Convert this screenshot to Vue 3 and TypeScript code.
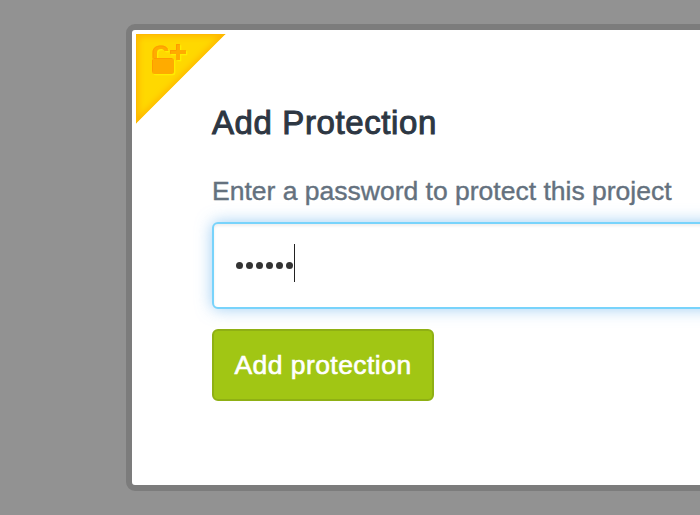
<script setup lang="ts">
import { ref } from 'vue'

const title = 'Add Protection'
const label = 'Enter a password to protect this project'
const action = 'Add protection'
const typedCharacters = ref(6)
</script>

<template>
  <main class="backdrop">
    <section class="modal" role="dialog" :aria-label="title">
      <svg class="ribbon" width="90" height="90" viewBox="0 0 90 90" aria-hidden="true">
        <defs>
          <clipPath id="corner"><path d="M0 0H89.500L0 89.500Z" /></clipPath>
          <filter id="soften" x="-20%" y="-20%" width="140%" height="140%">
            <feGaussianBlur stdDeviation="3" />
          </filter>
        </defs>
        <g clip-path="url(#corner)">
          <path d="M0 0H90L0 90Z" fill="#ffd800" />
          <path d="M0 0H90L0 90Z" fill="none" stroke="#ffac00" stroke-width="4.500" filter="url(#soften)" />
          <path d="M.5 90V.5H90" fill="none" stroke="#ffb900" stroke-width="1" />
        </g>
        <g transform="translate(1.300 1.300)" fill="#ffed00">
          <rect x="16" y="24" width="22" height="16" rx="2.500" />
          <path d="M16.500 25V18.500C16.500 14 20 11.500 25 11.500C29 11.500 32 13.500 32.500 17H28.500C27.500 15.500 26.500 15 25 15C22 15 21 16.500 21 19V25Z" />
          <path d="M40 10H44V16H50V20H44V26H40V20H34V16H40Z" />
        </g>
        <g fill="#ffab00">
          <rect x="16" y="24" width="22" height="16" rx="2.500" />
          <path d="M16.500 25V18.500C16.500 14 20 11.500 25 11.500C29 11.500 32 13.500 32.500 17H28.500C27.500 15.500 26.500 15 25 15C22 15 21 16.500 21 19V25Z" />
          <path d="M40 10H44V16H50V20H44V26H40V20H34V16H40Z" />
        </g>
        <path d="M17 24V18.500C17 14 20 12 25 12C28 12 30.500 13 31.500 15M16.500 26V37.500M18 24.500H36M40.500 16V10.500H43.500M34.500 19.500V16.500H40.500" fill="none" stroke="#ff9600" stroke-width="1" opacity=".8" />
      </svg>
      <form class="content" @submit.prevent>
        <h1 class="title"><span>{{ title }}</span></h1>
        <div class="label"><span>{{ label }}</span></div>
        <div class="field" role="textbox" :aria-label="label">
          <i v-for="n in typedCharacters" :key="n" class="dot"></i>
          <i class="caret"></i>
        </div>
        <button class="submit" type="submit"><span>{{ action }}</span></button>
      </form>
    </section>
  </main>
</template>

<style>
body {
  margin: 0;
  overflow: hidden;
}
</style>

<style scoped>
.backdrop {
  box-sizing: border-box;
  width: 700px;
  height: 515px;
  padding: 24px 0 0 126px;
  overflow: hidden;
  background: #929292;
  font-family: "Liberation Sans", Arial, sans-serif;
}

.modal {
  box-sizing: border-box;
  position: relative;
  width: 720px;
  height: 467px;
  border: 6px solid #7c7c7c;
  border-radius: 9px;
  background: #fff;
}

.ribbon {
  position: absolute;
  top: 4px;
  left: 4px;
}

.content {
  padding: 73px 80px 0;
}

.title {
  height: 40px;
  margin: 0;
  color: #2d3743;
  font-size: 33px;
  font-weight: 400;
  line-height: 39px;
  letter-spacing: 0.600px;
  white-space: nowrap;
  -webkit-text-stroke: 1px #2d3743;
}

.label {
  height: 32px;
  margin-top: 32px;
  color: #64717e;
  font-size: 26.500px;
  line-height: 32px;
  letter-spacing: 0;
  white-space: nowrap;
  -webkit-text-stroke: 0.400px #64717e;
}

.field {
  box-sizing: border-box;
  display: flex;
  align-items: center;
  width: 620px;
  height: 87px;
  margin-top: 15px;
  padding: 0 0 0 21.500px;
  border: 2px solid #78d3fb;
  border-radius: 6px;
  background: #fff;
  box-shadow: 0 0 16px rgba(80, 165, 235, 0.55), inset 0 2px 3px rgba(0, 0, 0, 0.07);
}

.dot {
  width: 7px;
  height: 7px;
  margin-right: 3px;
  border-radius: 50%;
  background: #333;
}

.caret {
  width: 1px;
  height: 38px;
  margin: 0 0 5px -1.500px;
  background: #222;
}

.submit {
  display: block;
  box-sizing: border-box;
  width: 222px;
  height: 72px;
  margin: 20px 0 0;
  padding: 0;
  border: 2px solid #8fb014;
  border-radius: 6px;
  background: #a1c614;
  color: #fff;
  font: 400 26.500px/68px "Liberation Sans", Arial, sans-serif;
  letter-spacing: 0.450px;
  white-space: nowrap;
  -webkit-text-stroke: 0.600px #fff;
}
</style>
